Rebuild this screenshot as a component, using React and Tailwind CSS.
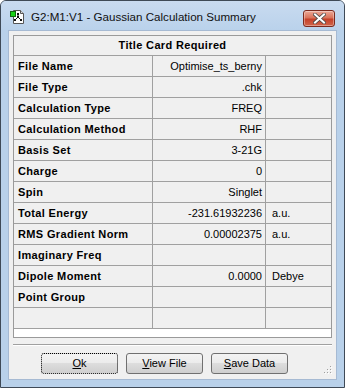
const rows = [
  ['File Name', 'Optimise_ts_berny', ''],
  ['File Type', '.chk', ''],
  ['Calculation Type', 'FREQ', ''],
  ['Calculation Method', 'RHF', ''],
  ['Basis Set', '3-21G', ''],
  ['Charge', '0', ''],
  ['Spin', 'Singlet', ''],
  ['Total Energy', '-231.61932236', 'a.u.'],
  ['RMS Gradient Norm', '0.00002375', 'a.u.'],
  ['Imaginary Freq', '', ''],
  ['Dipole Moment', '0.0000', 'Debye'],
  ['Point Group', '', ''],
  ['', '', ''],
];

function AppIcon() {
  return (
    <svg width="16" height="16" viewBox="0 0 16 16" className="shrink-0">
      {/* page */}
      <path d="M3.5 1.5h7l3 3v10h-10z" fill="#fff" stroke="#555" />
      <path d="M10.5 1.5v3h3" fill="#ddd" stroke="#555" />
      {/* molecule */}
      <path d="M8 5v3M8 8l-3 3M8 8l3 3" stroke="#111" strokeWidth="1" />
      <rect x="7" y="4" width="2" height="2" fill="#111" />
      <rect x="7" y="7" width="2" height="2" fill="#111" />
      <rect x="4" y="10" width="2" height="2" fill="#111" />
      <rect x="10" y="10" width="2" height="2" fill="#111" />
      {/* green badge */}
      <rect x="0.5" y="2.5" width="5" height="5" fill="#19d219" stroke="#116611" />
    </svg>
  );
}

function CloseButton() {
  return (
    <div className="absolute left-[302px] top-[9px] w-[32px] h-[17px] rounded-[3px] border border-[#7b2a1e] bg-[linear-gradient(#eca897,#d9735b_45%,#c5412a_55%,#d0654b)] flex items-center justify-center shadow-[inset_0_0_0_1px_rgba(255,255,255,0.35)]">
      <svg width="13" height="11" viewBox="0 0 13 11">
        <path d="M2 1.5l9 8M11 1.5l-9 8" stroke="#4a4a4a" strokeWidth="3.6" strokeLinecap="square" />
        <path d="M2 1.5l9 8M11 1.5l-9 8" stroke="#fff" strokeWidth="2" strokeLinecap="square" />
      </svg>
    </div>
  );
}

function Button({ children, focused }) {
  return (
    <button
      className={
        'w-[77px] h-[21px] rounded-[3px] border text-[11px] text-black leading-none flex items-center justify-center bg-[linear-gradient(#f3f3f3,#ebebeb_50%,#dddddd_50%,#cfcfcf)] ' +
        (focused ? 'border-dotted border-black' : 'border-[#707070]')
      }
    >
      {children}
    </button>
  );
}

export default function App() {
  return (
    <div className="w-[345px] h-[388px] bg-[#b9d1ea] border border-[#3f4a57] rounded-t-[6px] relative flex flex-col font-['Liberation_Sans',Arial,sans-serif] overflow-hidden">
      {/* Title bar */}
      <div className="h-[29px] shrink-0 bg-[linear-gradient(#c9dbf0,#bad2eb)] flex items-center pl-[9px] gap-[5px] pt-[2px]">
        <AppIcon />
        <span className="text-[11.6px] text-[#111]">G2:M1:V1 - Gaussian Calculation Summary</span>
      </div>
      <CloseButton />

      {/* Client area */}
      <div className="mx-[7px] h-[350px] bg-[#f0f0f0] border border-[#a6bad3] relative flex flex-col px-[4px] pt-[4px]">
        <div className="w-[319px] h-[303px] border border-[#9a9a9a] bg-white flex flex-col text-[11px] text-black">
          <div className="h-[20px] shrink-0 bg-[#f0f0f0] border-b border-[#a0a0a0] flex items-center justify-center font-bold tracking-[0.35px]">
            Title Card Required
          </div>
          {rows.map(([label, value, unit], i) => (
            <div key={i} className="h-[21px] shrink-0 bg-[#f0f0f0] border-b border-[#a0a0a0] flex">
              <div className="w-[139px] border-r border-[#a0a0a0] pl-[4px] flex items-center font-bold tracking-[0.35px]">{label}</div>
              <div className="w-[113px] border-r border-[#a0a0a0] pr-[3px] flex items-center justify-end">{value}</div>
              <div className="flex-1 pl-[6px] flex items-center">{unit}</div>
            </div>
          ))}
        </div>

        {/* Separator */}
        <div className="mt-[6px] w-[319px] h-[2px] border-t border-[#a0a0a0] border-b border-b-white" />

        {/* Buttons */}
        <div className="mt-[7px] flex gap-[8px] pl-[28px]">
          <Button focused>
            <span><span className="underline">O</span>k</span>
          </Button>
          <Button>
            <span><span className="underline">V</span>iew File</span>
          </Button>
          <Button>
            <span><span className="underline">S</span>ave Data</span>
          </Button>
        </div>

        {/* Resize grip */}
        <svg className="absolute right-[4px] bottom-[5px]" width="9" height="9" viewBox="0 0 9 9">
          {[[7, 1], [4, 4], [7, 4], [1, 7], [4, 7], [7, 7]].map(([x, y], i) => (
            <g key={i}>
              <rect x={x} y={y} width="1" height="1" fill="#a0a0a0" />
              <rect x={x + 1} y={y + 1} width="1" height="1" fill="#fff" />
            </g>
          ))}
        </svg>
      </div>
    </div>
  );
}
